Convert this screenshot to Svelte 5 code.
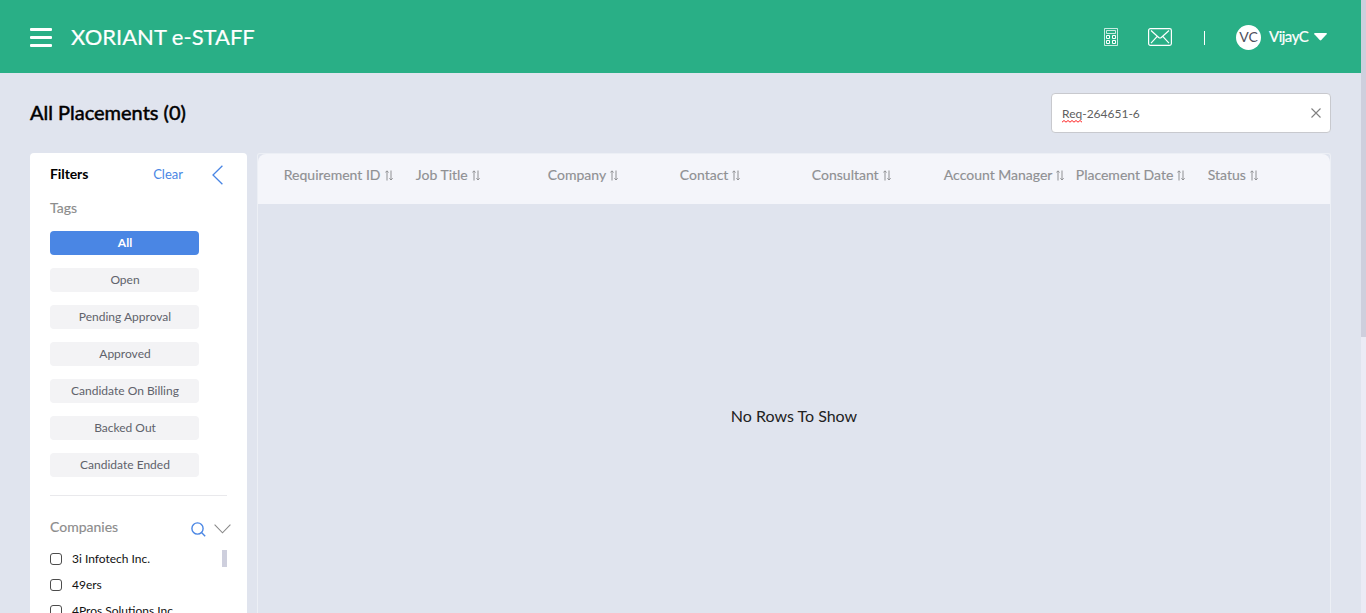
<script>
  const tags = ['All', 'Open', 'Pending Approval', 'Approved', 'Candidate On Billing', 'Backed Out', 'Candidate Ended'];
  const companies = ['3i Infotech Inc.', '49ers', '4Pros Solutions Inc.'];
  const columns = ['Requirement ID', 'Job Title', 'Company', 'Contact', 'Consultant', 'Account Manager', 'Placement Date', 'Status'];
  let active = $state('All');
</script>

<div class="app">
  <div class="page">
    <header>
      <div class="burger"><i></i><i></i><i></i></div>
      <div class="brand">XORIANT e-STAFF</div>
      <svg class="calc" width="14" height="18" viewBox="0 0 14 18" fill="none" stroke="#fff">
        <path d="M.5 .5h13v17H.5zM2.500 2.500h9v3h-9z" stroke-opacity=".75" />
        <path d="M2.500 7.500h3v3h-3zM8.500 7.500h3v3h-3zM2.500 12.500h3v3h-3zM8.500 12.500h3v3h-3z" />
      </svg>
      <svg class="mail" width="24" height="18" viewBox="0 0 24 18" fill="none" stroke="#fff" stroke-width="1.200">
        <rect x=".6" y=".6" width="22.800" height="16.800" rx="1.800" />
        <path d="M3 2.500l7.700 7q1.300 1 2.600 0l7.700-7M3 15.200l6-6.500M21 15.200l-6-6.500" />
      </svg>
      <span class="bar"></span>
      <div class="avatar">VC</div>
      <div class="user">VijayC</div>
      <svg class="caret" width="13" height="8" viewBox="0 0 13 8"><path d="M.8 0h11.400q1.200.2.400 1.200L7.300 7q-.8.800-1.600 0L.4 1.200Q-.3.200.8 0z" fill="#fff" /></svg>
    </header>

    <div class="titlebar">
      <h1>All Placements (0)</h1>
      <div class="search">
        <span class="query"><span class="word">Req<svg width="20" height="3" viewBox="0 0 20 3"><path d="M0 2.200l2-1.700 2 1.700 2-1.700 2 1.700 2-1.700 2 1.700 2-1.700 2 1.700 2-1.700 2 1.700" fill="none" stroke="#f22" /></svg></span>-264651-6</span>
        <svg width="10" height="10" viewBox="0 0 10 10"><path d="M.5.5l9 9M9.500.5l-9 9" stroke="#808080" stroke-width="1.100" /></svg>
      </div>
    </div>

    <main>
      <aside>
        <div class="filters">
          <strong>Filters</strong>
          <span class="clear">Clear</span>
          <svg width="11" height="20" viewBox="0 0 11 20" fill="none" stroke="#4a86e4" stroke-width="1.300"><path d="M10.400.8L1 10l9.400 9.200" /></svg>
        </div>
        <div class="label">Tags</div>
        <div class="tags">
          {#each tags as tag}
            <button class:active={active === tag} onclick={() => (active = tag)}>{tag}</button>
          {/each}
        </div>
        <hr />
        <div class="section">
          <span class="label">Companies</span>
          <svg class="find" width="15" height="15" viewBox="0 0 15 15" fill="none" stroke="#4a86e4" stroke-width="1.400"><circle cx="6.500" cy="6.500" r="5.600" /><path d="M10.500 10.500l3.700 3.700" /></svg>
          <svg width="17" height="10" viewBox="0 0 17 10" fill="none" stroke="#888" stroke-width="1.100"><path d="M.6.600L8.500 8.800 16.400.600" /></svg>
        </div>
        <div class="list">
          <div class="items">
            {#each companies as name}
              <div class="item"><span class="box"></span><span class="name">{name}</span></div>
            {/each}
          </div>
          <div class="thumb"></div>
        </div>
      </aside>

      <section class="grid">
        <div class="head">
          {#each columns as col}
            <div class="col">
              <span>{col}</span>
              <svg width="8" height="11" viewBox="0 0 8 11" fill="none" stroke="#8f9093"><path d="M2 10.500V1M.3 2.500L2 .8l1.500 1.700M6 .5V10M4.400 8.300L6 10l1.700-1.700" /></svg>
            </div>
          {/each}
        </div>
        <div class="empty">No Rows To Show</div>
      </section>
    </main>
  </div>
  <div class="scroll"><div></div></div>
</div>

<style>
  :global(body) { margin: 0; overflow: hidden; }
  .app {
    display: flex;
    height: 613px;
    overflow: hidden;
    font-family: Lato, "Liberation Sans", sans-serif;
    background: #e0e4ee;
    color: #111;
  }
  svg { display: block; flex: none; }
  .page { flex: 1; min-width: 0; display: flex; flex-direction: column; }
  .scroll { width: 5px; background: #ebebf5; }
  .scroll div { height: 337px; background: #cecfdd; }

  header {
    flex: none;
    height: 73px;
    box-sizing: border-box;
    padding: 1px 34px 0 30px;
    display: flex;
    align-items: center;
    background: #29af86;
    color: #fff;
  }
  .burger { display: flex; flex-direction: column; gap: 5px; width: 22px; margin-top: 1px; }
  .burger i { height: 3px; background: #fff; border-radius: 1px; }
  .brand { margin-left: 19px; font-size: 22px; line-height: 28px; flex: 1; white-space: nowrap; -webkit-text-stroke: .2px #fff; }
  .mail { margin-left: 30px; }
  .bar { width: 1px; height: 14px; margin: 1px 31px 0 32px; background: #fff; }
  .avatar {
    width: 25px; height: 25px; line-height: 24px; border-radius: 50%;
    background: #fff; color: #4d4f5c; font-size: 14px; text-align: center;
  }
  .user { margin: -2px 0 0 8px; width: 40px; font-size: 15px; line-height: 20px; letter-spacing: -.5px; white-space: nowrap; -webkit-text-stroke: .2px #fff; }
  .caret { margin-left: 5px; }

  .titlebar {
    flex: none;
    height: 80px;
    padding: 0 30px;
    display: flex;
    align-items: center;
    justify-content: space-between;
  }
  h1 { margin: -2px 0 0; font-size: 20px; line-height: 26px; font-weight: 400; color: #000; -webkit-text-stroke: .5px #000; }
  .search {
    width: 280px; height: 40px; box-sizing: border-box; padding: 0 9.500px 0 10px;
    display: flex; align-items: center; justify-content: space-between;
    background: #fff; border: 1px solid #c8c9ce; border-radius: 4px;
  }
  .search > svg { margin-top: -1px; }
  .query { font-size: 12px; line-height: 18px; color: #606060; margin-top: 2px; }
  .word { position: relative; }
  .word svg { position: absolute; left: 0; bottom: -2px; }

  main { flex: 1; min-height: 0; padding: 0 30px; display: flex; gap: 10px; }
  aside {
    flex: none; width: 217px; box-sizing: border-box; padding: 0 17px 0 20px;
    background: #fff; border-radius: 4px 4px 0 0; overflow: hidden;
    display: flex; flex-direction: column;
  }
  .filters { flex: none; display: flex; align-items: center; height: 44px; box-sizing: border-box; padding-right: 7px; }
  .filters strong { flex: 1; font-size: 14px; line-height: 20px; color: #000; letter-spacing: -.1px; margin-top: -2px; }
  .clear { font-size: 13px; line-height: 20px; color: #4a86e4; margin: -2px 29px 0 0; }
  .label { font-size: 14px; line-height: 20px; color: #8c8c8c; -webkit-text-stroke: .15px #8c8c8c; }
  aside > .label { margin-top: 1px; }
  .tags { flex: none; width: 149px; margin-top: 13px; display: flex; flex-direction: column; gap: 13px; }
  .tags button {
    height: 24px; padding: 0 0 0 1px; border: 0; border-radius: 4px; background: #f3f3f5;
    color: #60626b; font: 12px/24px Lato, sans-serif;
  }
  .tags .active { background: #4a86e4; color: #fff; font-weight: 700; }
  hr { flex: none; width: 177px; height: 1px; margin: 18px 0 0; border: 0; background: #e9e9ec; }
  .section { flex: none; display: flex; align-items: center; height: 20px; margin: 21px -.5px 0 0; }
  .section .label { flex: 1; }
  .find { margin: 4px 8px 0 0; }
  .section svg:last-child { margin-top: 3px; }
  .list { flex: none; display: flex; justify-content: space-between; margin-top: 12px; padding-right: 3px; }
  .items { margin-top: -3px; }
  .item { display: flex; align-items: center; height: 26px; font-size: 12px; gap: 10px; white-space: nowrap; }
  .name { margin-top: -2px; }
  .box { width: 12px; height: 12px; box-sizing: border-box; border: 1px solid #4c4c4c; border-radius: 3px; }
  .thumb { width: 5px; height: 17px; margin-top: 1px; background: #cecfdd; }

  .grid {
    flex: 1; min-width: 0; box-sizing: border-box; border: 1px solid #eceff5; border-bottom: 0;
    border-radius: 3px 3px 0 0; display: flex; flex-direction: column;
  }
  .head {
    flex: none; height: 50px; box-sizing: border-box; padding-left: 25.800px; display: flex;
    background: #f4f5fa; border-radius: 8px 8px 0 0;
  }
  .col {
    width: 132px; height: 42px; flex: none; display: flex; align-items: center; gap: 4px;
    font-size: 14px; color: #8f9093; white-space: nowrap; -webkit-text-stroke: .15px #8f9093;
  }
  .col:last-child { width: 60px; }
  .col span { margin-top: -1px; }
  .col svg { margin-top: 1px; }
  .empty { height: 422px; flex: none; display: flex; align-items: center; justify-content: center; font-size: 16px; color: #222; }
</style>
